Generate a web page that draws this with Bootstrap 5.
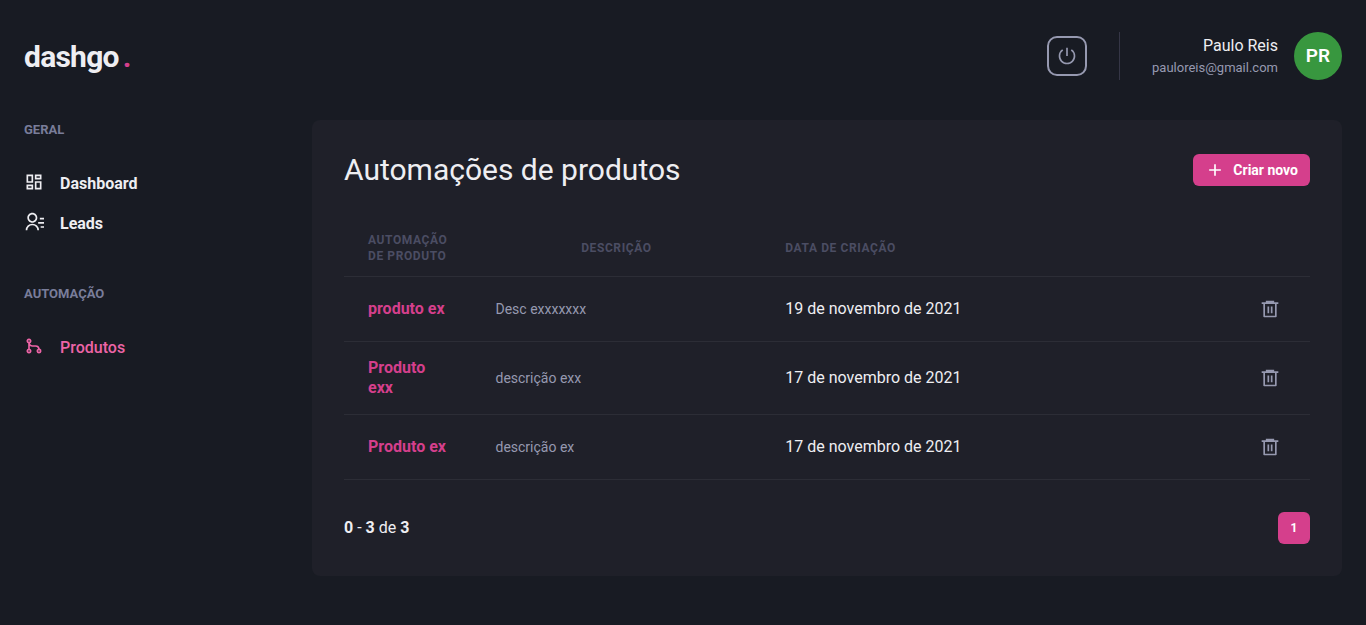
<!DOCTYPE html>
<html lang="pt-BR">
<head>
<meta charset="utf-8">
<meta name="viewport" content="width=device-width, initial-scale=1">
<title>Automações de produtos | dashgo</title>
<link href="https://cdn.jsdelivr.net/npm/bootstrap@5.3.0/dist/css/bootstrap.min.css" rel="stylesheet">
<style>
  :root {
    --gray-900: #181b23; --gray-800: #1f2029; --gray-700: #353646; --gray-600: #4b4d63;
    --gray-400: #797d9a; --gray-300: #9699b0; --gray-50: #eeeef2;
    --pink: #d53f8c; --pink-light: #ed64a6;
  }
  body { background: var(--gray-900); color: var(--gray-50); font-family: Roboto, "Liberation Sans", sans-serif; font-size: 16px; line-height: 24px; }
  svg { display: block; flex: none; }
  .topbar { height: 80px; }
  .brand { font-size: 30px; line-height: 36px; padding-top: 2px; font-weight: 700; letter-spacing: -0.025em; color: var(--gray-50); }
  .brand span { color: var(--pink); }
  .power { width: 40px; height: 40px; padding: 0; border: 2px solid var(--gray-300); border-radius: 10px; color: var(--gray-300); }
  .profile { margin-left: 32px; padding-left: 32px; border-left: 1px solid var(--gray-700); }
  .mail { font-size: 13px; line-height: 20px; color: var(--gray-300); }
  .avatar { width: 48px; height: 48px; background: #38973f; font-size: 19px; font-weight: 600; color: #fff; }
  .shell { gap: 32px; }
  .side { width: 256px; flex: none; }
  .side-title { font-size: 13px; line-height: 20px; font-weight: 700; color: var(--gray-400); margin: 0 0 32px; }
  .side-links { gap: 16px; }
  .side-link { gap: 16px; color: var(--gray-50); font-weight: 700; text-decoration: none; }
  .side-link.current { color: var(--pink-light); font-weight: 500; }
  .panel { background: var(--gray-800); border-radius: 8px; padding: 32px; }
  .panel-title { font-size: 30px; line-height: 36px; font-weight: 400; margin: 0; }
  .btn-new { --bs-btn-color: #fff; --bs-btn-bg: var(--pink); --bs-btn-hover-bg: #b83280; --bs-btn-hover-color: #fff; height: 32px; padding: 0 12px; border: 0; border-radius: 6px; font-size: 14px; font-weight: 700; }
  .grid-table { --bs-table-bg: transparent; --bs-table-color: var(--gray-50); --bs-table-border-color: #2c2d36; table-layout: fixed; line-height: 20px; margin: 32px 0; }
  .grid-table th, .grid-table td { padding: 16px 24px; }
  .grid-table thead th { padding: 12px 24px; font-size: 12px; line-height: 16px; font-weight: 700; letter-spacing: 0.05em; color: var(--gray-600); text-transform: uppercase; }
  .c-name { width: 13.2%; }
  .c-desc { width: 30%; }
  .c-act { width: 80px; }
  .product { color: var(--pink); font-weight: 700; text-decoration: none; }
  .grid-table .desc { font-size: 14px; color: var(--gray-300); }
  .trash { width: 32px; height: 32px; padding: 0; border: 0; color: var(--gray-300); }
  .page-now { width: 32px; height: 32px; padding: 0; border: 0; border-radius: 6px; background: var(--pink); color: #fff; font-size: 12px; font-weight: 700; }
</style>
</head>
<body>
<header class="topbar d-flex align-items-center justify-content-between px-4 mt-3">
  <a href="#" class="brand text-decoration-none">dashgo<span class="ms-1">.</span></a>
  <div class="d-flex align-items-center">
    <button type="button" class="btn power d-flex align-items-center justify-content-center" aria-label="Sair">
      <svg width="20" height="20" viewBox="0 0 24 24" fill="currentColor"><path d="M6.265 3.807l1.147 1.639a8 8 0 1 0 9.176 0l1.147-1.639A9.988 9.988 0 0 1 22 12c0 5.523-4.477 10-10 10S2 17.523 2 12a9.988 9.988 0 0 1 4.265-8.193zM11 12V2h2v10h-2z"/></svg>
    </button>
    <div class="profile d-flex align-items-center gap-3">
      <div class="text-end">
        <div>Paulo Reis</div>
        <div class="mail">pauloreis@gmail.com</div>
      </div>
      <div class="avatar rounded-circle d-flex align-items-center justify-content-center">PR</div>
    </div>
  </div>
</header>

<div class="shell d-flex align-items-start my-4 px-4">
  <aside class="side">
    <nav aria-label="Geral">
      <h2 class="side-title">GERAL</h2>
      <div class="side-links d-flex flex-column">
        <a href="#" class="side-link d-flex align-items-start">
          <svg width="20" height="20" viewBox="0 0 24 24" fill="currentColor"><path d="M13 21V11h8v10h-8zM3 13V3h8v10H3zm6-2V5H5v6h4zM3 21v-6h8v6H3zm2-2h4v-2H5v2zm10 0h4v-6h-4v6zM13 3h8v6h-8V3zm2 2v2h4V5h-4z"/></svg>
          <span>Dashboard</span></a>
        <a href="#" class="side-link d-flex align-items-start">
          <svg width="20" height="20" viewBox="0 0 24 24" fill="currentColor"><path d="M19 7h5v2h-5V7zm-2 5h7v2h-7v-2zm3 5h4v2h-4v-2zM2 22a8 8 0 1 1 16 0h-2a6 6 0 1 0-12 0H2zm8-9c-3.315 0-6-2.685-6-6s2.685-6 6-6 6 2.685 6 6-2.685 6-6 6zm0-2c2.210 0 4-1.790 4-4s-1.790-4-4-4-4 1.790-4 4 1.790 4 4 4z"/></svg>
          <span>Leads</span></a>
      </div>
    </nav>
    <nav aria-label="Automação" class="mt-5">
      <h2 class="side-title">AUTOMAÇÃO</h2>
      <div class="side-links d-flex flex-column">
        <a href="#" class="side-link current d-flex align-items-start" aria-current="page">
          <svg width="20" height="20" viewBox="0 0 24 24" fill="currentColor"><path d="M7.105 8.790A3.001 3.001 0 0 0 10 11h4a5.001 5.001 0 0 1 4.927 4.146A3.001 3.001 0 0 1 18 21a3 3 0 0 1-1.105-5.790A3.001 3.001 0 0 0 14 13h-4a4.978 4.978 0 0 1-3-1v3.170a3.001 3.001 0 1 1-2 0V8.830a3.001 3.001 0 1 1 2.105-.040zM6 7a1 1 0 1 0 0-2 1 1 0 0 0 0 2zm0 12a1 1 0 1 0 0-2 1 1 0 0 0 0 2zm12 0a1 1 0 1 0 0-2 1 1 0 0 0 0 2z"/></svg>
          <span>Produtos</span></a>
      </div>
    </nav>
  </aside>

  <main class="panel flex-grow-1">
    <div class="d-flex align-items-center justify-content-between">
      <h1 class="panel-title">Automações de produtos</h1>
      <button type="button" class="btn btn-new d-flex align-items-center gap-2">
        <svg width="20" height="20" viewBox="0 0 24 24" fill="currentColor"><path d="M11 11V5h2v6h6v2h-6v6h-2v-6H5v-2z"/></svg>
        Criar novo</button>
    </div>

    <table class="table grid-table align-middle">
      <thead class="align-middle">
        <tr>
          <th scope="col" class="c-name">Automação de produto</th>
          <th scope="col" class="c-desc text-center">Descrição</th>
          <th scope="col">Data de criação</th>
          <th scope="col" class="c-act" aria-label="Ações"></th>
        </tr>
      </thead>
      <tbody>
        <tr>
          <td><a href="#" class="product">produto ex</a></td>
          <td class="desc">Desc exxxxxxx</td>
          <td>19 de novembro de 2021</td>
          <td><button type="button" class="btn trash d-flex align-items-center justify-content-center" aria-label="Excluir"><svg width="20" height="20" viewBox="0 0 24 24" fill="currentColor"><path d="M7 4V2h10v2h5v2h-2v15a1 1 0 0 1-1 1H5a1 1 0 0 1-1-1V6H2V4h5zM6 6v14h12V6H6zm3 3h2v8H9V9zm4 0h2v8h-2V9z"/></svg></button></td>
        </tr>
        <tr>
          <td><a href="#" class="product">Produto exx</a></td>
          <td class="desc">descrição exx</td>
          <td>17 de novembro de 2021</td>
          <td><button type="button" class="btn trash d-flex align-items-center justify-content-center" aria-label="Excluir"><svg width="20" height="20" viewBox="0 0 24 24" fill="currentColor"><path d="M7 4V2h10v2h5v2h-2v15a1 1 0 0 1-1 1H5a1 1 0 0 1-1-1V6H2V4h5zM6 6v14h12V6H6zm3 3h2v8H9V9zm4 0h2v8h-2V9z"/></svg></button></td>
        </tr>
        <tr>
          <td><a href="#" class="product">Produto ex</a></td>
          <td class="desc">descrição ex</td>
          <td>17 de novembro de 2021</td>
          <td><button type="button" class="btn trash d-flex align-items-center justify-content-center" aria-label="Excluir"><svg width="20" height="20" viewBox="0 0 24 24" fill="currentColor"><path d="M7 4V2h10v2h5v2h-2v15a1 1 0 0 1-1 1H5a1 1 0 0 1-1-1V6H2V4h5zM6 6v14h12V6H6zm3 3h2v8H9V9zm4 0h2v8h-2V9z"/></svg></button></td>
        </tr>
      </tbody>
    </table>

    <div class="d-flex align-items-center justify-content-between">
      <div><strong>0</strong> - <strong>3</strong> de <strong>3</strong></div>
      <button type="button" class="btn page-now" aria-label="Página 1" aria-current="page">1</button>
    </div>
  </main>
</div>
<script src="https://cdn.jsdelivr.net/npm/bootstrap@5.3.0/dist/js/bootstrap.bundle.min.js"></script>
</body>
</html>
